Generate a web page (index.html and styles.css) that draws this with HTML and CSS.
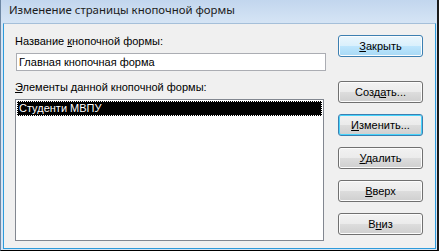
FILE: index.html
```html
<!DOCTYPE html>
<html lang="ru">
<head>
    <meta charset="UTF-8" />
    <title>Изменение страницы кнопочной формы</title>
    <link rel="stylesheet" href="styles.css">
</head>
<body>
    <div class="window">
        <div class="titlebar">Изменение страницы кнопочной формы</div>

        <div class="client">
            <div class="form-part">
                <label class="caption" for="pageName">Название <u>к</u>нопочной формы:</label>
                <input id="pageName" class="textbox" type="text" value="Главная кнопочная форма" />

                <label class="caption caption-list"><u>Э</u>лементы данной кнопочной формы:</label>
                <div class="listbox">
                    <div class="list-item selected">Студенти МВПУ</div>
                </div>
            </div>

            <div class="buttons">
                <button class="btn btn-default"><u>З</u>акрыть</button>
                <button class="btn gap-big">Созд<u>а</u>ть...</button>
                <button class="btn btn-focus"><u>И</u>зменить...</button>
                <button class="btn"><u>У</u>далить</button>
                <button class="btn"><u>В</u>верх</button>
                <button class="btn">В<u>н</u>из</button>
            </div>
        </div>
    </div>
</body>
</html>
```

FILE: styles.css
```css
* {
    box-sizing: border-box;
    margin: 0;
    padding: 0;
}

body {
    width: 439px;
    height: 251px;
    overflow: hidden;
    font-family: "Liberation Sans", Arial, sans-serif;
    font-size: 11px;
    color: #000000;
    background-color: #000000;
}

.window {
    width: 439px;
    height: 251px;
    display: flex;
    flex-direction: column;
    background: linear-gradient(to bottom, #c2d6ee, #d6e5f5 24px, #d6e5f5);
    border-left: 1px solid #6d87a4;
    border-right: 2px solid #1a1a1a;
    border-bottom: 1px solid #000000;
    padding: 0 1px 1px 2px;
}

.titlebar {
    height: 23px;
    line-height: 20px;
    padding-left: 6px;
    font-family: "Noto Sans", sans-serif;
    font-size: 11.4px;
    color: #1c1c1c;
    flex-shrink: 0;
}

.client {
    flex: 1;
    display: flex;
    background-color: #f0f0f0;
    border: 1px solid #2e9bdb;
    border-top-color: #a5bfd9;
}

.form-part {
    flex: 1;
    display: flex;
    flex-direction: column;
    padding: 10px 0 0 11px;
}

.caption {
    line-height: 15px;
    height: 15px;
}

.textbox {
    margin: 4px 0 0 1px;
    width: 310px;
    height: 18px;
    border: 1px solid #abadb3;
    background-color: #ffffff;
    font-family: "Liberation Sans", Arial, sans-serif;
    font-size: 11px;
    padding: 0 2px;
    outline: none;
}

.caption-list {
    margin-top: 9px;
}

.listbox {
    margin-top: 4px;
    width: 309px;
    height: 142px;
    border: 1px solid #828790;
    background-color: #ffffff;
    padding: 1px;
}

.list-item {
    height: 15px;
    line-height: 14px;
    padding-left: 2px;
}

.list-item.selected {
    background-color: #000000;
    color: #ffffff;
    outline: 1px dotted #ffffff;
    outline-offset: -1px;
}

.buttons {
    width: 85px;
    margin: 11px 12px 0 0;
    display: flex;
    flex-direction: column;
    gap: 11px;
}

.btn {
    height: 22px;
    width: 85px;
    border: 1px solid #707070;
    border-radius: 3px;
    background: linear-gradient(to bottom, #f2f2f2, #ebebeb 50%, #dddddd 50%, #cfcfcf);
    box-shadow: inset 0 0 0 1px #fcfcfc;
    font-family: "Liberation Sans", Arial, sans-serif;
    font-size: 11px;
    color: #000000;
}

.btn-default {
    border-color: #3c7fb1;
    background: linear-gradient(to bottom, #eaf6fd, #d9f0fc 50%, #bee6fd 50%, #a7d9f5);
}

.gap-big {
    margin-top: 13px;
}

.btn-focus {
    border-color: #3c7fb1;
    box-shadow: inset 0 0 0 1px #48d4fc;
}
```
